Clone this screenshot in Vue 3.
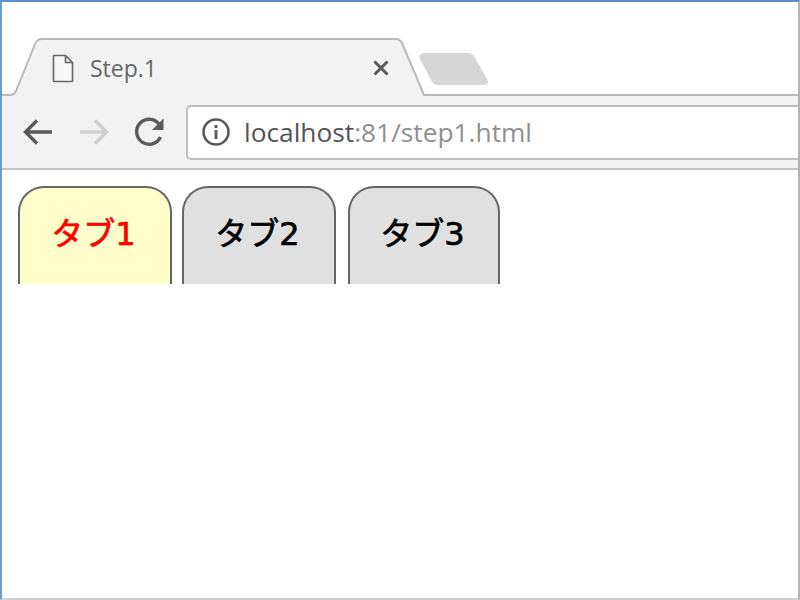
<template>
  <div class="window">
    <div class="tabstrip">
      <svg class="strip-art" width="800" height="96" viewBox="0 0 800 96">
        <path class="tab-shape" d="M0 95 H10 Q14 95 16 91 L35 44 Q37 39 42 39 H396 Q400 39 402 43 L424 95 H800 V96 H0 Z" />
        <path class="tab-line" d="M0 95 H10 Q14 95 16 91 L35 44 Q37 39 42 39 H396 Q400 39 402 43 L424 95 H800" />
        <path class="new-tab" d="M424 53 H468 Q472 53 474 56 L487 79 Q490 85 484 85 H438 Q434 85 432 82 L420 59 Q418 53 424 53 Z" />
      </svg>
      <div class="tab">
        <svg class="doc-icon" width="22" height="29" viewBox="0 0 22 29">
          <path d="M2 1.5 H13.5 L20.5 8.5 V27 Q20.5 27.5 20 27.5 H2 Q1.5 27.5 1.5 27 V2 Q1.5 1.5 2 1.5 Z M13.5 1.5 V8.5 H20.5" />
        </svg>
        <span class="tab-title">Step.1</span>
        <svg class="close-icon" width="18" height="18" viewBox="0 0 18 18">
          <path d="M2.5 2.5 L15.5 15.5 M15.5 2.5 L2.5 15.5" />
        </svg>
      </div>
    </div>

    <div class="toolbar">
      <svg class="nav-icon back" width="32" height="32" viewBox="0 0 32 32">
        <path d="M30 16 H4 M15 4.5 L3.5 16 L15 27.5" />
      </svg>
      <svg class="nav-icon forward" width="32" height="32" viewBox="0 0 32 32">
        <path d="M2 16 H28 M17 4.5 L28.5 16 L17 27.5" />
      </svg>
      <svg class="nav-icon reload" width="32" height="32" viewBox="0 0 32 32">
        <path d="M26.5 21 A12.5 12.5 0 1 1 25 8" />
        <path class="arrow-head" d="M29.5 2.5 V14 H18 Z" />
      </svg>
      <div class="urlbar">
        <svg class="info-icon" width="30" height="30" viewBox="0 0 30 30">
          <circle cx="15" cy="15" r="12.5" />
          <rect x="13.5" y="13" width="3" height="9" />
          <rect x="13.5" y="8" width="3" height="3" />
        </svg>
        <span class="url"><span class="host">localhost</span>:81/step1.html</span>
      </div>
    </div>

    <div class="page">
      <div v-for="(tab, index) in tabs" :key="tab" :class="['page-tab', { active: index === 0 }]">
        {{ tab }}
      </div>
    </div>
  </div>
</template>

<script setup>
const tabs = ['タブ1', 'タブ2', 'タブ3'];
</script>

<style scoped>
.window {
  width: 800px;
  height: 600px;
  box-sizing: border-box;
  background: #fff;
  border-top: 2px solid #5f8fc6;
  border-left: 2px solid #6a9bd0;
  border-right: 2px solid #b4b4b4;
  border-bottom: 2px solid #cfcfcf;
  overflow: hidden;
  font-family: "Open Sans", "Noto Sans", sans-serif;
}

/* --- Tab strip --- */
.tabstrip {
  position: relative;
  height: 94px;
  box-sizing: border-box;
  padding: 48px 0 0 50px;
}
.strip-art {
  position: absolute;
  left: -2px;
  top: -2px;
}
.tab-shape {
  fill: #f2f2f2;
}
.tab-line {
  fill: none;
  stroke: #b9b9b9;
  stroke-width: 2;
}
.new-tab {
  fill: #d6d6d6;
}
.tab {
  position: relative;
  display: flex;
  align-items: center;
  width: 338px;
  height: 36px;
}
.doc-icon {
  flex-shrink: 0;
  fill: #f7f7f7;
  stroke: #666;
  stroke-width: 1.6;
}
.tab-title {
  margin-left: 16px;
  font-size: 23px;
  color: #666;
}
.close-icon {
  margin-left: auto;
  fill: none;
  stroke: #5a5a5a;
  stroke-width: 3;
}

/* --- Toolbar --- */
.toolbar {
  display: flex;
  align-items: center;
  gap: 24px;
  height: 74px;
  box-sizing: border-box;
  padding-left: 20px;
  background: #f2f2f2;
  border-bottom: 2px solid #c4c4c4;
}
.nav-icon {
  flex-shrink: 0;
  fill: none;
  stroke-width: 3.4;
}
.back, .reload {
  stroke: #5a5a5a;
}
.forward {
  stroke: #cfcfcf;
}
.arrow-head {
  fill: #5a5a5a;
  stroke: none;
}
.urlbar {
  display: flex;
  align-items: center;
  flex: 1;
  height: 55px;
  box-sizing: border-box;
  margin-left: -4px;
  padding-left: 13px;
  background: #fff;
  border: 2px solid #bdbdbd;
  border-right: none;
  border-radius: 5px 0 0 5px;
}
.info-icon {
  flex-shrink: 0;
  fill: none;
  stroke: #5a5a5a;
  stroke-width: 2.6;
}
.info-icon rect {
  fill: #5a5a5a;
  stroke: none;
}
.url {
  margin-left: 13px;
  font-size: 26.3px;
  color: #8f8f8f;
}
.host {
  color: #555;
}

/* --- Page content --- */
.page {
  display: flex;
  gap: 10px;
  padding: 16px 0 0 16px;
}
.page-tab {
  width: 154px;
  height: 98px;
  box-sizing: border-box;
  padding-top: 22px;
  padding-right: 3px;
  text-align: center;
  font-family: "DejaVu Sans", "Noto Sans CJK JP", sans-serif;
  font-size: 32px;
  line-height: 48px;
  -webkit-text-stroke: 0.7px currentColor;
  color: #000;
  background: #e0e0e0;
  border: 2px solid #666;
  border-bottom: none;
  border-radius: 26px 26px 0 0;
}
.page-tab:nth-child(3) {
  width: 152px;
  margin-left: 2px;
}
.page-tab.active {
  color: #f00;
  background: #ffc;
}
</style>
